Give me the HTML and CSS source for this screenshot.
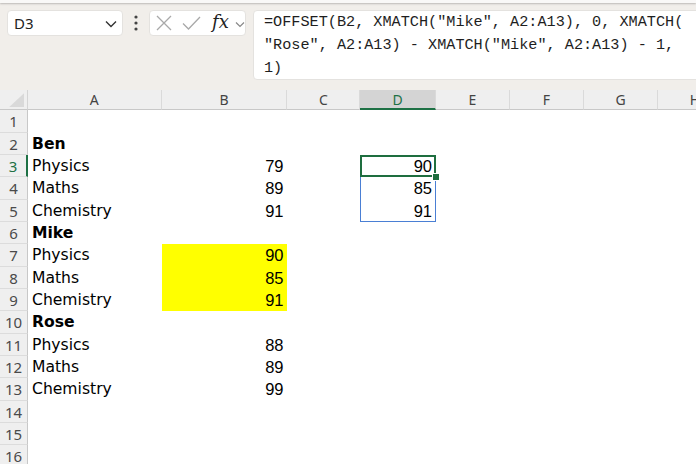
FILE: index.html
```html
<!DOCTYPE html>
<html>
<head>
<meta charset="utf-8">
<link rel="stylesheet" href="styles.css">
</head>
<body>
<div class="topstrip"></div>
<div class="toolbar">
  <div class="namebox">
    <span class="ref">D3</span>
    <svg class="chev" width="12" height="8" viewBox="0 0 12 8"><path d="M1 1.5 L6 6.5 L11 1.5" fill="none" stroke="#333" stroke-width="1.4"/></svg>
  </div>
  <div class="dots">
    <svg width="4" height="16" viewBox="0 0 4 16"><circle cx="2" cy="2" r="1.6" fill="#444"/><circle cx="2" cy="8" r="1.6" fill="#444"/><circle cx="2" cy="14" r="1.6" fill="#444"/></svg>
  </div>
  <div class="fxbox">
    <svg class="ic-x" width="16" height="16" viewBox="0 0 16 16"><path d="M1 1 L15 15 M15 1 L1 15" stroke="#a9a9a9" stroke-width="1.3" fill="none"/></svg>
    <svg class="ic-ok" width="19" height="14" viewBox="0 0 19 14"><path d="M1 7.5 L6.5 13 L18 1" stroke="#a9a9a9" stroke-width="1.3" fill="none"/></svg>
    <span class="fx">fx</span>
    <svg class="chev2" width="10" height="7" viewBox="0 0 10 7"><path d="M1 1.5 L5 5.5 L9 1.5" fill="none" stroke="#888" stroke-width="1.2"/></svg>
  </div>
  <div class="formula">=OFFSET(B2, XMATCH("Mike", A2:A13), 0, XMATCH(<br>"Rose", A2:A13) - XMATCH("Mike", A2:A13) - 1,<br>1)</div>
</div>

<div class="sheet">
  <div class="corner"><span class="tri"></span></div>
  <div class="ch">A</div><div class="ch">B</div><div class="ch">C</div><div class="ch sel">D</div><div class="ch">E</div><div class="ch">F</div><div class="ch">G</div><div class="ch last">H</div>

  <div class="rh">1</div><div class="c"></div><div class="c"></div><div class="c"></div><div class="c"></div><div class="c"></div><div class="c"></div><div class="c"></div><div class="c"></div>
  <div class="rh">2</div><div class="c t b">Ben</div><div class="c"></div><div class="c"></div><div class="c"></div><div class="c"></div><div class="c"></div><div class="c"></div><div class="c"></div>
  <div class="rh act">3</div><div class="c t">Physics</div><div class="c n">79</div><div class="c"></div><div class="c n d3">90</div><div class="c"></div><div class="c"></div><div class="c"></div><div class="c"></div>
  <div class="rh">4</div><div class="c t">Maths</div><div class="c n">89</div><div class="c"></div><div class="c n d4">85</div><div class="c"></div><div class="c"></div><div class="c"></div><div class="c"></div>
  <div class="rh">5</div><div class="c t">Chemistry</div><div class="c n">91</div><div class="c"></div><div class="c n d5">91</div><div class="c"></div><div class="c"></div><div class="c"></div><div class="c"></div>
  <div class="rh">6</div><div class="c t b">Mike</div><div class="c"></div><div class="c"></div><div class="c"></div><div class="c"></div><div class="c"></div><div class="c"></div><div class="c"></div>
  <div class="rh">7</div><div class="c t">Physics</div><div class="c n y">90</div><div class="c"></div><div class="c"></div><div class="c"></div><div class="c"></div><div class="c"></div><div class="c"></div>
  <div class="rh">8</div><div class="c t">Maths</div><div class="c n y">85</div><div class="c"></div><div class="c"></div><div class="c"></div><div class="c"></div><div class="c"></div><div class="c"></div>
  <div class="rh">9</div><div class="c t">Chemistry</div><div class="c n y">91</div><div class="c"></div><div class="c"></div><div class="c"></div><div class="c"></div><div class="c"></div><div class="c"></div>
  <div class="rh">10</div><div class="c t b">Rose</div><div class="c"></div><div class="c"></div><div class="c"></div><div class="c"></div><div class="c"></div><div class="c"></div><div class="c"></div>
  <div class="rh">11</div><div class="c t">Physics</div><div class="c n">88</div><div class="c"></div><div class="c"></div><div class="c"></div><div class="c"></div><div class="c"></div><div class="c"></div>
  <div class="rh">12</div><div class="c t">Maths</div><div class="c n">89</div><div class="c"></div><div class="c"></div><div class="c"></div><div class="c"></div><div class="c"></div><div class="c"></div>
  <div class="rh">13</div><div class="c t">Chemistry</div><div class="c n">99</div><div class="c"></div><div class="c"></div><div class="c"></div><div class="c"></div><div class="c"></div><div class="c"></div>
  <div class="rh">14</div><div class="c"></div><div class="c"></div><div class="c"></div><div class="c"></div><div class="c"></div><div class="c"></div><div class="c"></div><div class="c"></div>
  <div class="rh">15</div><div class="c"></div><div class="c"></div><div class="c"></div><div class="c"></div><div class="c"></div><div class="c"></div><div class="c"></div><div class="c"></div>
  <div class="rh">16</div><div class="c"></div><div class="c"></div><div class="c"></div><div class="c"></div><div class="c"></div><div class="c"></div><div class="c"></div><div class="c"></div>
</div>
</body>
</html>
```

FILE: styles.css
```css
* { box-sizing: border-box; }
html, body { margin: 0; padding: 0; }
body {
  width: 696px;
  height: 464px;
  overflow: hidden;
  background: #ffffff;
  font-family: "Noto Sans", "DejaVu Sans", sans-serif;
}
.topstrip {
  height: 3px;
  background: #f9f8f7;
  box-shadow: 0 1px 2px rgba(0,0,0,0.22);
  position: relative;
  z-index: 1;
}
.toolbar {
  height: 87px;
  background: #f1eeea;
  display: flex;
  align-items: flex-start;
  padding: 7px 0 0 7px;
}
.toolbar > * { flex: none; }
.namebox {
  width: 116px;
  height: 26px;
  background: #fff;
  border-radius: 4px;
  border: 1px solid #e4e2df;
  display: flex;
  align-items: center;
  justify-content: space-between;
  padding: 0 5px 0 6px;
}
.ref {
  font-size: 15px;
  color: #222;
  line-height: 1;
}
.chev { margin-top: 2px; }
.dots {
  width: 26px;
  height: 26px;
  display: flex;
  align-items: center;
  justify-content: center;
}
.fxbox {
  width: 97px;
  height: 26px;
  background: #fff;
  border-radius: 4px;
  border: 1px solid #e4e2df;
  display: flex;
  align-items: center;
  padding-left: 6px;
}
.ic-x { margin-right: 10px; }
.ic-ok { margin-right: 11px; }
.fx {
  font-family: "DejaVu Serif", "Liberation Serif", serif;
  font-style: italic;
  font-size: 18px;
  color: #222;
  line-height: 1;
  margin-right: 6px;
  margin-top: -2px;
}
.chev2 { margin-top: 2px; }
.formula {
  margin-left: 7px;
  width: 460px;
  height: 70px;
  background: #fff;
  border-radius: 4px;
  border: 1px solid #e4e2df;
  padding: 0 0 0 10px;
  font-family: "Liberation Mono", "DejaVu Sans Mono", monospace;
  font-size: 15.2px;
  line-height: 23px;
  color: #1e1e1e;
  white-space: nowrap;
}
.sheet {
  display: grid;
  grid-template-columns: 28px 133.7px 125.8px 73px 75.5px 74px 74px 74px 74px;
  grid-template-rows: 20.3px repeat(16, 22.33px);
}
.corner {
  background: #efefef;
  border-right: 1px solid #d4d4d4;
  border-bottom: 1px solid #c8c8c8;
  display: flex;
  align-items: flex-end;
  justify-content: flex-end;
  padding: 0 3px 2px 0;
}
.tri {
  width: 15px;
  height: 14px;
  background: #d9d9d9;
  clip-path: polygon(100% 0, 100% 100%, 0 100%);
}
.ch {
  background: #efefef;
  border-right: 1px solid #dadada;
  border-bottom: 1px solid #c8c8c8;
  display: flex;
  align-items: center;
  justify-content: center;
  font-size: 14px;
  color: #444;
  padding-bottom: 1px;
}
.ch.sel {
  background: #d4d4d4;
  color: #1e7145;
  border-bottom: 2px solid #1e7145;
  padding-bottom: 0;
}
.ch.last { border-right: none; }
.rh {
  background: #efefef;
  border-right: 1px solid #c8c8c8;
  border-bottom: 1px solid #dcdcdc;
  display: flex;
  align-items: center;
  justify-content: center;
  font-size: 15px;
  color: #4a4a4a;
  padding-top: 1px;
}
.rh.act {
  color: #1e7145;
  border-right: 2px solid #1e7145;
}
.c {
  background: #fff;
  line-height: 22.33px;
  white-space: nowrap;
  color: #000;
}
.t {
  font-family: "DejaVu Sans", sans-serif;
  font-size: 15.6px;
  padding-left: 4px;
}
.b { font-weight: bold; }
.n {
  font-family: "Liberation Sans", Arial, sans-serif;
  font-size: 16.5px;
  text-align: right;
  padding-right: 4px;
}
.y { background: #ffff00; }
.d3 {
  position: relative;
  box-shadow: inset 0 0 0 2px #1e6e3f;
}
.d3::after {
  content: "";
  position: absolute;
  right: -4px;
  bottom: -4px;
  width: 6px;
  height: 6px;
  background: #1e6e3f;
  border: 1px solid #fff;
  z-index: 2;
}
.d4 { box-shadow: inset 1px 0 0 #4a7fd4, inset -1px 0 0 #4a7fd4; }
.d5 { box-shadow: inset 1px 0 0 #4a7fd4, inset -1px 0 0 #4a7fd4, inset 0 -1px 0 #4a7fd4; }
```
